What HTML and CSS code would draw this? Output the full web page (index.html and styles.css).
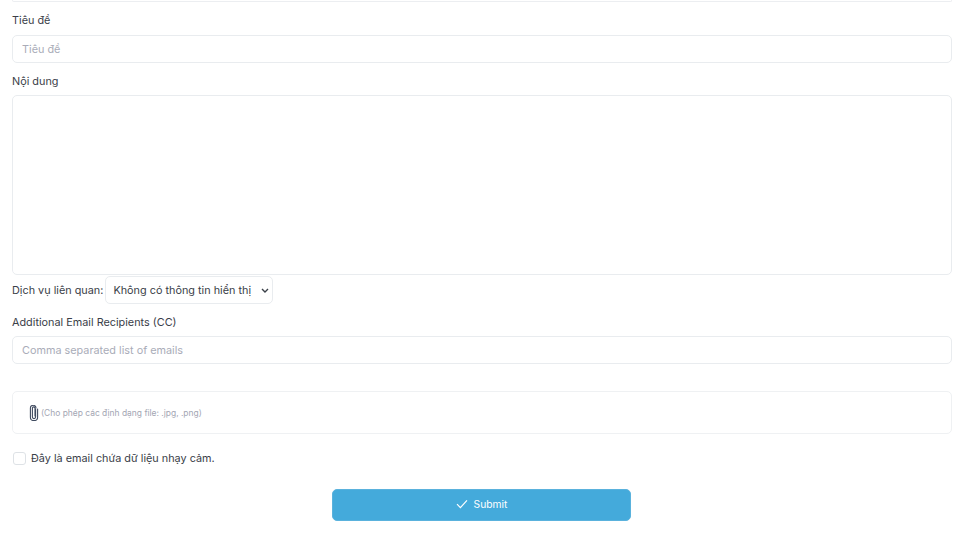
FILE: index.html
```html
<!DOCTYPE html>
<html lang="vi">
<head>
    <meta charset="UTF-8">
    <meta name="viewport" content="width=device-width, initial-scale=1.0">
    <title>Gửi yêu cầu</title>
    <link rel="stylesheet" href="styles.css">
</head>
<body>
  <form class="ticket-form">
    <div class="cut-field"></div>

    <label class="field-label label-title" for="tieude">Tiêu đề</label>
    <input class="field" type="text" id="tieude" placeholder="Tiêu đề">

    <label class="field-label label-content" for="noidung">Nội dung</label>
    <textarea class="field area" id="noidung"></textarea>

    <div class="service-row">
      <label for="dichvu">Dịch vụ liên quan:</label>
      <select class="service-select" id="dichvu">
        <option>Không có thông tin hiển thị</option>
      </select>
    </div>

    <label class="field-label label-cc" for="cc">Additional Email Recipients (CC)</label>
    <input class="field" type="text" id="cc" placeholder="Comma separated list of emails">

    <div class="attach-box">
      <svg class="clip" width="10" height="16" viewBox="0 0 10 16" fill="none" stroke="#3f4a5f" stroke-width="1.1" stroke-linecap="round">
        <path d="M6.6 4v8a1.6 1.6 0 0 1-3.2 0V3.2a1.3 1.3 0 0 1 2.6 0V11"/>
        <path d="M8.6 4v8.2a3.6 3.4 0 0 1-7.2 0V3.4a2.8 2.9 0 0 1 5.6-.4"/>
      </svg>
      <span class="attach-note">(Cho phép các định dạng file: .jpg, .png)</span>
    </div>

    <label class="sensitive-row">
      <input class="check" type="checkbox">
      <span>Đây là email chứa dữ liệu nhạy cảm.</span>
    </label>

    <div class="submit-row">
      <button class="submit-btn" type="button">
        <svg width="12" height="10" viewBox="0 0 12 10" fill="none" stroke="#ffffff" stroke-width="1.2">
          <path d="M1 5.2l3.4 3.4L11 1.4"/>
        </svg>
        Submit
      </button>
    </div>
  </form>
</body>
</html>
```

FILE: styles.css
```css
* {margin: 0; box-sizing: border-box;}
body {font-family: Inter, "Liberation Sans", sans-serif; font-size: 10.85px; color: #3a4048; background-color: #ffffff;}

.ticket-form {display: flex; flex-direction: column; padding: 0 8px 0 12px;}
.cut-field {height: 2px; border: 1px solid #eceef1; border-top: none; border-radius: 0 0 5px 5px;}

.field-label {display: block; line-height: 14px;}
.label-title {margin-top: 11px; margin-bottom: 8px;}
.label-content {margin-top: 11px; margin-bottom: 7px;}
.label-cc {margin-top: 11px; margin-bottom: 7px;}

.field {
    display: block;
    width: 100%;
    height: 28px;
    padding: 0 9px;
    border: 1px solid #e9ecef;
    border-radius: 5px;
    font-family: inherit;
    font-size: 10.85px;
    color: #3a4048;
    outline: none;
}
.field::placeholder {color: #a9acb8; opacity: 1;}
.area {height: 180px; padding: 8px 9px; resize: none;}

.service-row {display: flex; align-items: center; gap: 2px; margin-top: 1px;}
.service-select {
    appearance: none;
    width: 168px;
    height: 28px;
    padding: 0 20px 0 7px;
    border: 1px solid #e9ecef;
    border-radius: 5px;
    background: #ffffff url("data:image/svg+xml,%3Csvg xmlns='http://www.w3.org/2000/svg' width='8' height='5' viewBox='0 0 8 5'%3E%3Cpath d='M1 1l3 3 3-3' fill='none' stroke='%233a4048' stroke-width='1.4'/%3E%3C/svg%3E") no-repeat right 3px center;
    font-family: inherit;
    font-size: 10.85px;
    color: #3a4048;
}

.attach-box {
    display: flex;
    align-items: center;
    gap: 2px;
    height: 43px;
    margin-top: 27px;
    padding-left: 16px;
    border: 1px solid #eff1f3;
    border-radius: 5px;
}
.attach-note {font-size: 8.45px; color: #a3a6b3;}

.sensitive-row {display: flex; align-items: center; gap: 5px; margin-top: 17px; padding-left: 1px; line-height: 14px;}
.check {
    appearance: none;
    width: 13px;
    height: 13px;
    border: 1px solid #dee2e6;
    border-radius: 3px;
    background-color: #ffffff;
}

.submit-row {display: flex; justify-content: center; margin-top: 24px;}
.submit-btn {
    display: flex;
    align-items: center;
    justify-content: center;
    gap: 6px;
    width: 299px;
    height: 32px;
    margin-right: 1px;
    padding-bottom: 4px;
    border: 1px solid #5ab2dd;
    border-radius: 5px;
    background-color: #44aadb;
    color: #ffffff;
    font-family: inherit;
    font-size: 10.3px;
    font-weight: 400;
}
```
